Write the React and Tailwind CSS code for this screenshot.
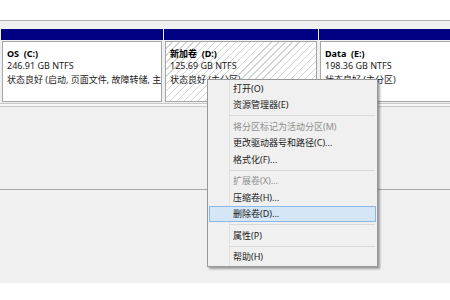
import React from "react";

const font = { fontFamily: '"Noto Sans", "Noto Sans CJK SC", sans-serif' };

function Item({ label, disabled, active }) {
  return (
    <div
      className={
        "h-[16.5px] mx-px flex items-center text-[9px] leading-none pl-[23px] " +
        (active ? "bg-[#d5e6f7] border border-[#86b8e8]" : "border border-transparent") +
        (disabled ? " text-[#8d8d8d]" : " text-[#1a1a1a]")
      }
    >
      {label}
    </div>
  );
}

function Sep() {
  return (
    <div className="h-[5px] flex items-center pl-[21px] pr-[2px]">
      <div className="h-px w-full bg-[#d8d8d8]" />
    </div>
  );
}

function Column({ width, title, size, status, hatch }) {
  return (
    <div className="flex flex-col shrink-0" style={{ width }}>
      <div className="h-[11px] bg-[#000080]" />
      <div className="p-px h-[63px]">
        <div
          className={
            "h-full border border-[#a6a6a6] pl-[4px] pt-[5px] overflow-hidden whitespace-nowrap " +
            (hatch
              ? "bg-[repeating-linear-gradient(135deg,#ffffff_0px,#ffffff_4px,#d4d4d4_4px,#d4d4d4_5px)]"
              : "bg-white")
          }
        >
          <div className="text-[9px] leading-[13px] font-bold text-black">{title}</div>
          <div className="text-[9px] leading-[12px] text-[#1a1a1a]">{size}</div>
          <div className="text-[9px] leading-[15px] text-[#1a1a1a]">{status}</div>
        </div>
      </div>
    </div>
  );
}

export default function App() {
  return (
    <div className="w-[450px] h-[300px] bg-white relative overflow-hidden" style={font}>
      <div className="h-[20px] bg-white" />
      <div className="border-t border-[#b4b4b4] bg-[#f0f0f0] h-[83px] pt-[8px] flex gap-px pl-px">
        <Column width={162} title={"OS\u00a0\u00a0(C:)"} size="246.91 GB NTFS" status="状态良好 (启动, 页面文件, 故障转储, 主分区)" />
        <Column width={154} title={"新加卷\u00a0\u00a0(D:)"} size="125.69 GB NTFS" status="状态良好 (主分区)" hatch />
        <Column width={140} title={"Data\u00a0\u00a0(E:)"} size="198.36 GB NTFS" status="状态良好 (主分区)" />
      </div>
      <div className="h-[4px] border-t border-[#c8c8c8] border-b bg-[#f7f7f7]" />
      <div className="h-[83px] bg-[#f0f0f0] border-b border-[#a8a8a8]" />
      <div className="h-[93px] bg-[#f0f0f0]" />

      <div className="absolute left-[207px] top-[79px] w-[171px] h-[188px] bg-[#f0f0f0] border border-[#979797] shadow-[2px_2px_2px_rgba(0,0,0,0.35)]">
        <div className="absolute left-[21px] top-0 bottom-0 w-px bg-[#e2e2e2]" />
        <div className="relative">
          <Item label="打开(O)" />
          <Item label="资源管理器(E)" />
          <Sep />
          <Item label="将分区标记为活动分区(M)" disabled />
          <Item label="更改驱动器号和路径(C)..." />
          <Item label="格式化(F)..." />
          <Sep />
          <Item label="扩展卷(X)..." disabled />
          <Item label="压缩卷(H)..." />
          <Item label="删除卷(D)..." active />
          <Sep />
          <Item label="属性(P)" />
          <Sep />
          <Item label="帮助(H)" />
        </div>
      </div>
    </div>
  );
}
